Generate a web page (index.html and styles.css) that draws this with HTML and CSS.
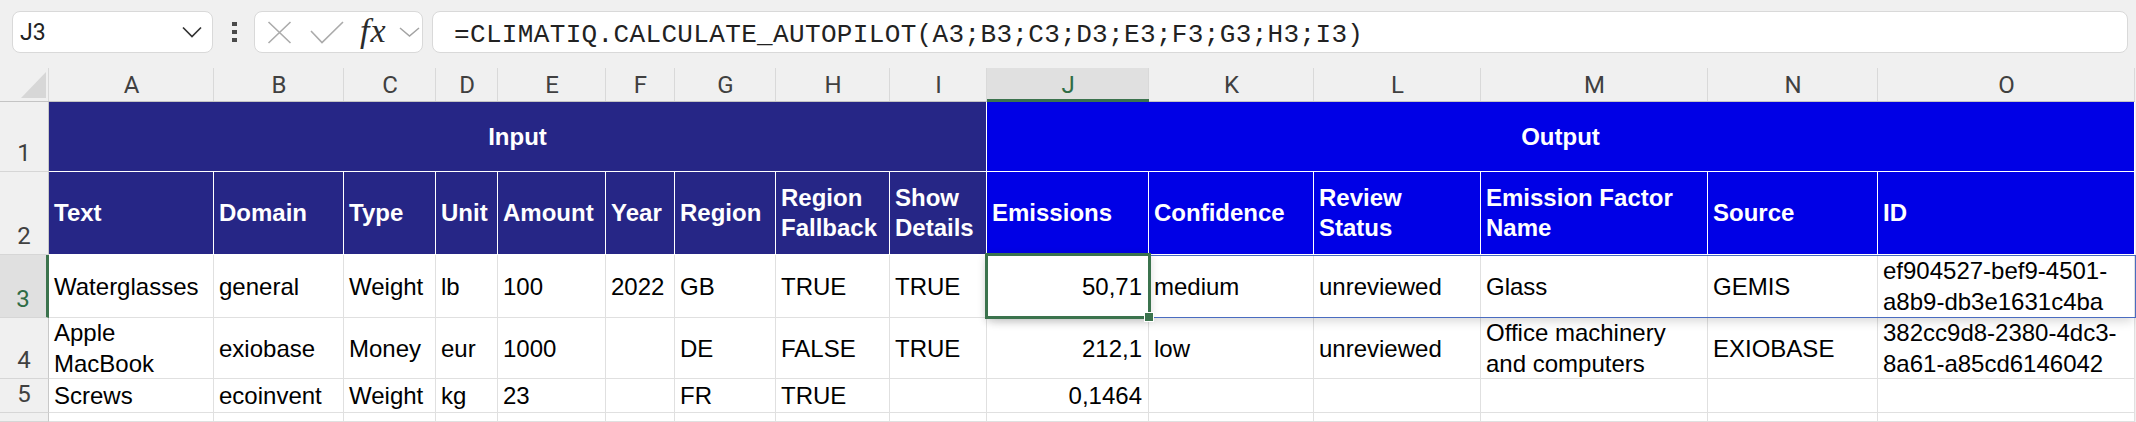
FILE: index.html
```html
<!DOCTYPE html>
<html lang="en">
<head>
<meta charset="utf-8">
<title>Sheet</title>
<link rel="stylesheet" href="styles.css">
</head>
<body>
<div class="toolbar">
  <div class="namebox">
    <span class="ref">J3</span>
    <svg class="chev" width="20" height="12" viewBox="0 0 20 12"><polyline points="1,1.5 10,10.5 19,1.5" fill="none" stroke="#333" stroke-width="1.7"/></svg>
  </div>
  <div class="kebab"><i></i><i></i><i></i></div>
  <div class="fxbox">
    <svg class="xicon" width="25" height="23" viewBox="0 0 25 23"><path d="M1.5 1 L23.5 22 M23.5 1 L1.5 22" stroke="#ababab" stroke-width="1.6" fill="none"/></svg>
    <svg class="check" width="34" height="23" viewBox="0 0 34 23"><polyline points="1,10 12,21.5 33,1" fill="none" stroke="#ababab" stroke-width="1.6"/></svg>
    <span class="fx">fx</span>
    <svg class="chev-small" width="21" height="10" viewBox="0 0 21 10"><polyline points="1,1 10.5,9 20,1" fill="none" stroke="#a3a3a3" stroke-width="1.5"/></svg>
  </div>
  <div class="formula">=CLIMATIQ.CALCULATE_AUTOPILOT(A3;B3;C3;D3;E3;F3;G3;H3;I3)</div>
</div>

<div class="sheet">
  <div class="corner"><svg width="49" height="37" viewBox="0 0 49 37"><polygon points="46,8 46,34 21,34" fill="#d7d7d7"/></svg></div>
  <div class="colh">A</div>
  <div class="colh">B</div>
  <div class="colh">C</div>
  <div class="colh">D</div>
  <div class="colh">E</div>
  <div class="colh">F</div>
  <div class="colh">G</div>
  <div class="colh">H</div>
  <div class="colh">I</div>
  <div class="colh active">J</div>
  <div class="colh">K</div>
  <div class="colh">L</div>
  <div class="colh">M</div>
  <div class="colh">N</div>
  <div class="colh">O</div>

  <div class="rowh">1</div>
  <div class="band in span9">Input</div>
  <div class="band out span6">Output</div>

  <div class="rowh">2</div>
  <div class="hd in">Text</div>
  <div class="hd in">Domain</div>
  <div class="hd in">Type</div>
  <div class="hd in">Unit</div>
  <div class="hd in">Amount</div>
  <div class="hd in">Year</div>
  <div class="hd in">Region</div>
  <div class="hd in">Region Fallback</div>
  <div class="hd in">Show Details</div>
  <div class="hd out">Emissions</div>
  <div class="hd out">Confidence</div>
  <div class="hd out">Review Status</div>
  <div class="hd out">Emission Factor Name</div>
  <div class="hd out">Source</div>
  <div class="hd out">ID</div>

  <div class="rowh active">3</div>
  <div class="c">Waterglasses</div>
  <div class="c">general</div>
  <div class="c">Weight</div>
  <div class="c">lb</div>
  <div class="c">100</div>
  <div class="c">2022</div>
  <div class="c">GB</div>
  <div class="c">TRUE</div>
  <div class="c">TRUE</div>
  <div class="c num">50,71</div>
  <div class="c">medium</div>
  <div class="c">unreviewed</div>
  <div class="c">Glass</div>
  <div class="c">GEMIS</div>
  <div class="c">ef904527-bef9-4501-<wbr>a8b9-db3e1631c4ba</div>

  <div class="rowh">4</div>
  <div class="c">Apple MacBook</div>
  <div class="c">exiobase</div>
  <div class="c">Money</div>
  <div class="c">eur</div>
  <div class="c">1000</div>
  <div class="c"></div>
  <div class="c">DE</div>
  <div class="c">FALSE</div>
  <div class="c">TRUE</div>
  <div class="c num">212,1</div>
  <div class="c">low</div>
  <div class="c">unreviewed</div>
  <div class="c">Office machinery and computers</div>
  <div class="c">EXIOBASE</div>
  <div class="c">382cc9d8-2380-4dc3-<wbr>8a61-a85cd6146042</div>

  <div class="rowh">5</div>
  <div class="c">Screws</div>
  <div class="c">ecoinvent</div>
  <div class="c">Weight</div>
  <div class="c">kg</div>
  <div class="c">23</div>
  <div class="c"></div>
  <div class="c">FR</div>
  <div class="c">TRUE</div>
  <div class="c"></div>
  <div class="c num">0,1464</div>
  <div class="c"></div>
  <div class="c"></div>
  <div class="c"></div>
  <div class="c"></div>
  <div class="c"></div>

  <div class="rowh"></div>
  <div class="c"></div>
  <div class="c"></div>
  <div class="c"></div>
  <div class="c"></div>
  <div class="c"></div>
  <div class="c"></div>
  <div class="c"></div>
  <div class="c"></div>
  <div class="c"></div>
  <div class="c"></div>
  <div class="c"></div>
  <div class="c"></div>
  <div class="c"></div>
  <div class="c"></div>
  <div class="c"></div>

  <div class="spill"></div>
  <div class="selbox"></div>
  <div class="handle"></div>
</div>
</body>
</html>
```
FILE: styles.css
```css
* { box-sizing: border-box; margin: 0; padding: 0; }
html, body {
  width: 2136px;
  height: 422px;
  overflow: hidden;
  background: #f0f0f0;
}
body {
  font-family: "Liberation Sans", Arial, sans-serif;
}

/* ---------- toolbar ---------- */
.toolbar {
  height: 64px;
  display: flex;
  align-items: center;
  padding: 0 8px 0 12px;
}
.namebox {
  width: 201px;
  height: 42px;
  flex: none;
  background: #fff;
  border: 1px solid #d9d9d9;
  border-radius: 8px;
  display: flex;
  align-items: center;
  justify-content: space-between;
  padding: 0 10px 0 7px;
  font-family: Roboto, "Noto Sans", sans-serif;
  font-size: 23px;
  color: #222;
}
.kebab {
  margin-left: 19px;
  display: flex;
  flex-direction: column;
  gap: 4px;
  flex: none;
}
.kebab i {
  display: block;
  width: 5px;
  height: 4px;
  background: #4a4a4a;
}
.fxbox {
  margin-left: 17px;
  width: 169px;
  height: 42px;
  flex: none;
  background: #fff;
  border: 1px solid #d9d9d9;
  border-radius: 8px;
  display: flex;
  align-items: center;
  padding-left: 12px;
}
.xicon { flex: none; }
.check { margin-left: 18px; flex: none; }
.fx {
  margin-left: 16px;
  width: 30px;
  flex: none;
  font-family: "Liberation Serif", "DejaVu Serif", serif;
  font-style: italic;
  font-size: 34px;
  line-height: 34px;
  letter-spacing: 1px;
  color: #2b2b2b;
  position: relative;
  top: -1px;
}
.chev-small { margin-left: 9px; flex: none; }
.formula {
  margin-left: 9px;
  flex: 1;
  height: 42px;
  background: #fff;
  border: 1px solid #d9d9d9;
  border-radius: 8px;
  display: flex;
  align-items: center;
  padding: 5px 0 0 21px;
  font-family: "Liberation Mono", "DejaVu Sans Mono", monospace;
  font-size: 26px;
  letter-spacing: 0.35px;
  color: #222;
  white-space: nowrap;
}

/* ---------- sheet ---------- */
.sheet {
  position: relative;
  display: grid;
  grid-template-columns: 49px 165px 130px 92px 62px 108px 69px 101px 114px 97px 162px 165px 167px 227px 170px 257px;
  grid-template-rows: 38px 70px 83px 63px 61px 34px 9px;
  width: 2135px;
  background: #fff;
}
.corner {
  position: relative;
  background: #f0f0f0;
  border-bottom: 1px solid #c4c4c4;
}
.corner svg { display: block; }
.corner::after,
.colh::after {
  content: "";
  position: absolute;
  right: 0;
  top: 4px;
  bottom: 0;
  width: 1px;
  background: #d9d9d9;
}
.colh {
  position: relative;
  background: #f0f0f0;
  border-bottom: 1px solid #c4c4c4;
  display: flex;
  align-items: center;
  justify-content: center;
  padding-top: 4px;
  font-family: Roboto, "Noto Sans", sans-serif;
  font-size: 24px;
  color: #404040;
}
.colh.active {
  background: linear-gradient(#f0f0f0 0 4px, #e0e0e0 4px);
  color: #2f6c45;
  border-bottom: 3px solid #3b734d;
  padding-top: 6px;
}
.rowh {
  background: #f0f0f0;
  border-right: 1px solid #c8c8c8;
  border-bottom: 1px solid #d6d6d6;
  display: flex;
  align-items: flex-end;
  justify-content: center;
  padding-bottom: 6px;
  font-family: Roboto, "Noto Sans", sans-serif;
  font-size: 24px;
  line-height: 24px;
  color: #404040;
  overflow: hidden;
}
.rowh.active {
  background: #e0e0e0;
  color: #2f6c45;
  border-right: 3px solid #3b734d;
}

.in { background: #262686; }
.out { background: #0000e6; }
.span9 { grid-column: span 9; }
.span6 { grid-column: span 6; }

.band {
  display: flex;
  align-items: center;
  justify-content: center;
  color: #fff;
  font-weight: bold;
  font-size: 24px;
  border-right: 1px solid #fff;
  border-bottom: 1px solid #fff;
}
.hd {
  display: flex;
  align-items: center;
  padding: 0 5px;
  color: #fff;
  font-weight: bold;
  font-size: 24px;
  line-height: 30px;
  border-right: 1px solid #fff;
  border-bottom: 1px solid #fff;
  overflow: hidden;
}
.c {
  display: flex;
  align-items: center;
  padding: 0 5px;
  font-size: 24px;
  line-height: 31px;
  color: #000;
  border-right: 1px solid #e0e0e0;
  border-bottom: 1px solid #e0e0e0;
  overflow: hidden;
}
.num {
  justify-content: flex-end;
  padding-right: 6px;
}

/* ---------- overlays ---------- */
.spill {
  position: absolute;
  left: 987px;
  top: 191px;
  width: 1149px;
  height: 63px;
  border: 1px solid #4a6cc0;
  box-shadow: 0 6px 10px -3px rgba(0, 0, 0, 0.16);
  pointer-events: none;
}
.selbox {
  position: absolute;
  left: 985px;
  top: 189px;
  width: 166px;
  height: 66px;
  border: 3px solid #3b734d;
  box-shadow: 0 2px 8px rgba(0, 0, 0, 0.14);
  pointer-events: none;
}
.handle {
  position: absolute;
  left: 1145px;
  top: 249px;
  width: 8px;
  height: 8px;
  background: #3b734d;
  outline: 1px solid #fff;
}
```
